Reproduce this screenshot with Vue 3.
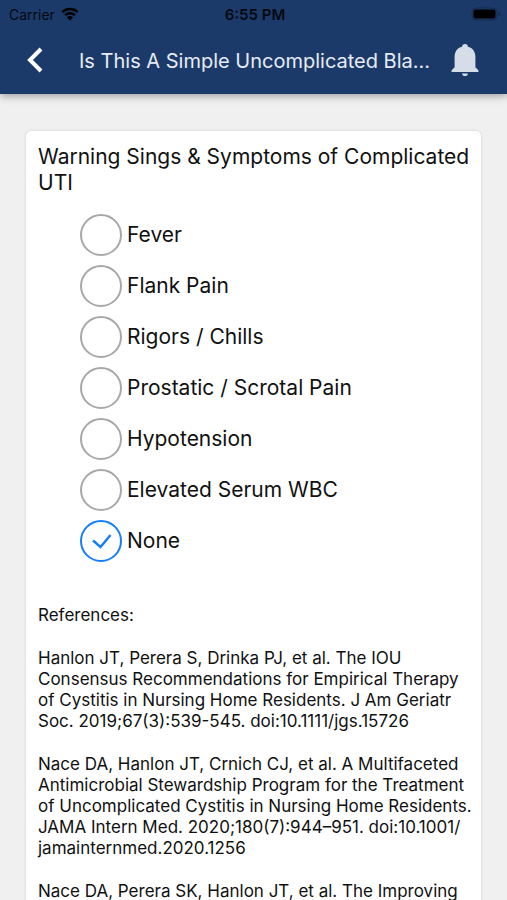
<script setup>
import { ref } from 'vue'

const symptoms = [
  { id: 'fever', label: 'Fever' },
  { id: 'flank', label: 'Flank Pain' },
  { id: 'rigors', label: 'Rigors / Chills' },
  { id: 'prostatic', label: 'Prostatic / Scrotal Pain' },
  { id: 'hypotension', label: 'Hypotension' },
  { id: 'wbc', label: 'Elevated Serum WBC' },
  { id: 'none', label: 'None' },
]
const selected = ref(['none'])

// \u200b lets a long DOI wrap after its slash
const references = [
  'Hanlon JT, Perera S, Drinka PJ, et al. The IOU Consensus Recommendations for Empirical Therapy of Cystitis in Nursing Home Residents. J Am Geriatr Soc. 2019;67(3):539-545. doi:10.1111/jgs.15726',
  'Nace DA, Hanlon JT, Crnich CJ, et al. A Multifaceted Antimicrobial Stewardship Program for the Treatment of Uncomplicated Cystitis in Nursing Home Residents. JAMA Intern Med. 2020;180(7):944–951. doi:10.1001/\u200bjamainternmed.2020.1256',
  'Nace DA, Perera SK, Hanlon JT, et al. The Improving',
]
</script>

<template>
  <div class="screen">
    <header class="top">
      <div class="status">
        <div class="carrier">
          <span>Carrier</span>
          <svg class="wifi" viewBox="0 0 18 14" aria-hidden="true">
            <path d="M1.3 5.2a11 11 0 0 1 15.4 0" />
            <path d="M4.1 8.2a7 7 0 0 1 9.8 0" />
            <path class="dot" d="M9 13.6 5.9 10.4a4.5 4.5 0 0 1 6.2 0z" />
          </svg>
        </div>
        <time class="clock">6:55 PM</time>
        <svg class="battery" viewBox="0 0 30 14" aria-hidden="true">
          <rect class="shell" x="1" y="1" width="25" height="12" rx="4" />
          <rect x="2.500" y="2.500" width="22" height="9" rx="2" />
          <path class="tip" d="M27.5 5v4c1.2-.4 1.8-1.100 1.800-2s-.6-1.600-1.800-2z" />
        </svg>
      </div>
      <nav class="bar">
        <button class="icon-button" type="button" aria-label="Back">
          <svg class="back" viewBox="0 0 16 26" aria-hidden="true">
            <path d="M14 2 3 13l11 11" />
          </svg>
        </button>
        <h1 class="title">Is This A Simple Uncomplicated Bla...</h1>
        <button class="icon-button" type="button" aria-label="Notifications">
          <svg class="bell" viewBox="0 0 28 34" aria-hidden="true">
            <path d="M14 1c-1.700 0-2.900 1.100-2.900 2.700C6.300 4.900 3.600 8.600 3.600 14v10.200L.6 27.200V29h26.800v-1.800l-3-3V14c0-5.400-2.700-9.100-7.500-10.300C16.900 2.100 15.700 1 14 1z" />
            <path d="M11 30.500h6c0 1.500-1.300 2.600-3 2.600s-3-1.100-3-2.600z" />
          </svg>
        </button>
      </nav>
    </header>

    <main class="content">
      <section class="card">
        <fieldset class="question">
          <legend class="heading">Warning Sings &amp; Symptoms of Complicated UTI</legend>
          <div class="options">
            <label v-for="s in symptoms" :key="s.id" class="option" :for="s.id">
              <span class="mark">
                <input :id="s.id" v-model="selected" class="box" type="checkbox" :value="s.id" />
                <svg class="tick" viewBox="0 0 42 42" aria-hidden="true">
                  <path d="M13 20.500l7.500 6.500L30.500 15" />
                </svg>
              </span>
              <span>{{ s.label }}</span>
            </label>
          </div>
        </fieldset>
        <div class="references">
          <p>References:</p>
          <p v-for="r in references" :key="r">{{ r }}</p>
        </div>
      </section>
    </main>
  </div>
</template>

<style>
body {
  margin: 0;
  background: #f0f0f0;
}
</style>

<style scoped>
.screen {
  display: flex;
  flex-direction: column;
  height: 100vh;
  overflow: hidden;
  background: #f0f0f0;
  color: #111;
  font-family: Inter, "Liberation Sans", sans-serif;
}

.top {
  position: relative;
  flex: none;
  background: #1c3a69;
  box-shadow: 0 2px 8px rgba(0, 0, 0, 0.35);
}

.status {
  display: grid;
  grid-template-columns: 1fr auto 1fr;
  align-items: center;
  height: 28px;
  padding: 0 6px 0 9px;
  color: #05080f;
  font-size: 14px;
}

.carrier {
  display: flex;
  align-items: center;
  gap: 6px;
}

.wifi {
  width: 18px;
  height: 14px;
  fill: none;
  stroke: #000;
  stroke-width: 2.4;
}

.wifi .dot {
  fill: #000;
  stroke: none;
}

.clock {
  font-size: 15px;
  font-weight: 600;
}

.battery {
  justify-self: end;
  width: 30px;
  height: 14px;
}

.battery .shell {
  fill: none;
  stroke: #142a4c;
}

.battery .tip {
  fill: #142a4c;
}

.bar {
  display: flex;
  align-items: center;
  height: 66px;
  padding: 0 21px 0 14px;
}

.icon-button {
  display: flex;
  flex: none;
  align-items: center;
  justify-content: center;
  width: 42px;
  height: 44px;
  margin-bottom: 2px;
  padding: 0;
  border: 0;
  background: none;
}

.back {
  width: 16px;
  height: 26px;
  fill: none;
  stroke: #fff;
  stroke-width: 4;
}

.bell {
  width: 28px;
  height: 34px;
  fill: #d5dde8;
}

.title {
  flex: 1;
  min-width: 0;
  margin: 0;
  padding-left: 23px;
  overflow: hidden;
  color: #e6ecf5;
  font-size: 20px;
  font-weight: 400;
  line-height: 26px;
  white-space: nowrap;
}

.content {
  display: flex;
  flex: 1;
  flex-direction: column;
  min-height: 0;
  padding: 37px 26px 0;
  overflow: hidden;
}

.card {
  flex: 1 0 auto;
  padding: 13px 8px 0 12px;
  border-radius: 5px 5px 0 0;
  background: #fff;
  box-shadow: 0 0 3px rgba(0, 0, 0, 0.15);
}

.question {
  min-width: 0;
  margin: 0;
  padding: 0;
  border: 0;
}

.heading {
  padding: 0;
  font-size: 21px;
  line-height: 26px;
}

.options {
  display: flex;
  flex-direction: column;
  gap: 9px;
  padding: 18px 0 0 42px;
}

.option {
  display: flex;
  align-items: center;
  gap: 5px;
  font-size: 21px;
  line-height: 26px;
}

.mark {
  position: relative;
  display: flex;
}

.box {
  width: 42px;
  height: 42px;
  margin: 0;
  border: 2px solid #a8a8a8;
  border-radius: 50%;
  appearance: none;
}

.box:checked {
  border-color: #147efb;
}

.tick {
  position: absolute;
  inset: 0;
  display: none;
  fill: none;
  stroke: #147efb;
  stroke-width: 2.4;
  pointer-events: none;
}

.box:checked + .tick {
  display: block;
}

.references {
  display: flex;
  flex-direction: column;
  gap: 22px;
  padding-top: 43px;
  font-size: 17px;
  line-height: 21px;
}

.references p {
  margin: 0;
}
</style>
